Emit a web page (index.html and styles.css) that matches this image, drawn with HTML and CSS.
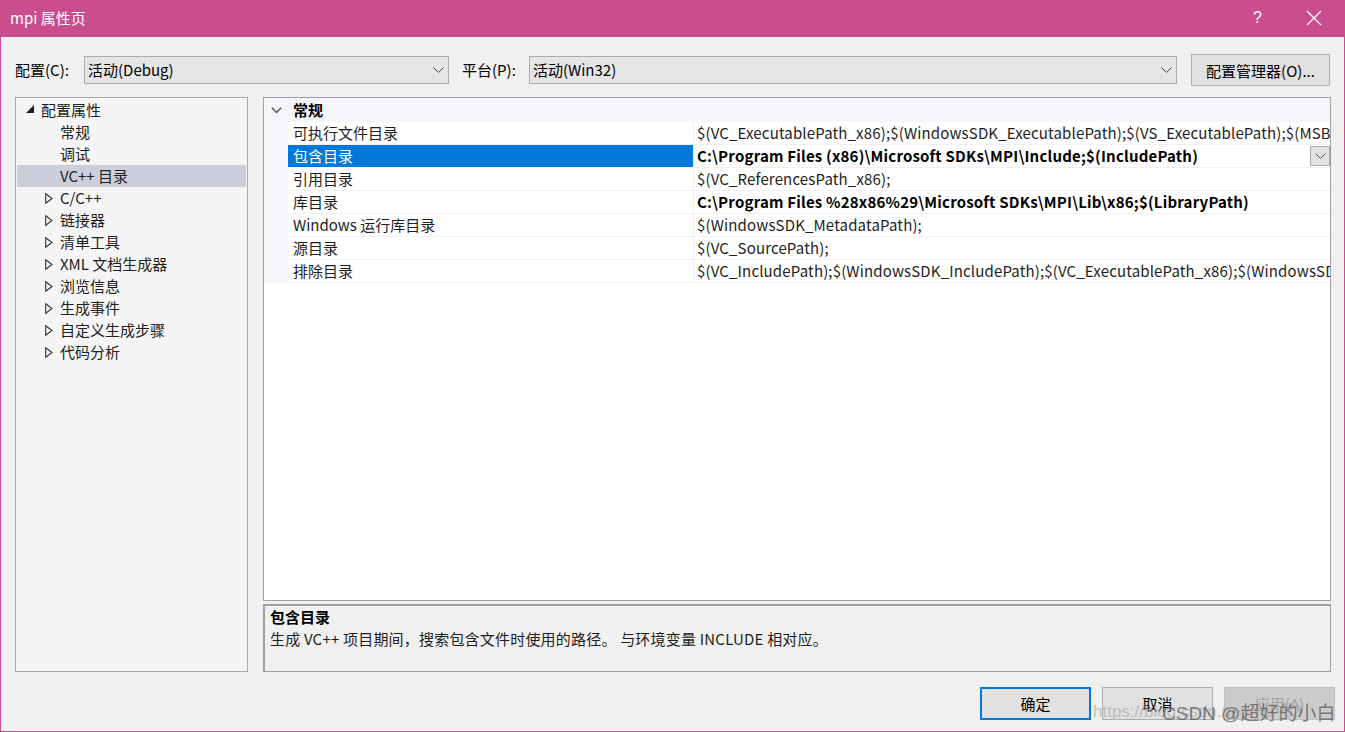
FILE: index.html
```html
<!DOCTYPE html>
<html lang="zh-CN">
<head>
<meta charset="utf-8">
<title>mpi 属性页</title>
<link rel="stylesheet" href="styles.css">
</head>
<body>
<div class="window">
  <div class="titlebar">
    <span class="title">mpi 属性页</span>
    <span class="tb-help">?</span>
    <span class="tb-close">
      <svg width="16" height="16" viewBox="0 0 16 16"><path d="M1 1 L15 15 M15 1 L1 15" stroke="#fff" stroke-width="1.3" fill="none"/></svg>
    </span>
  </div>
  <div class="frame">
    <div class="config-row">
      <span class="lbl lbl1">配置(C):</span>
      <div class="combo combo1"><span>活动(Debug)</span>
        <svg class="chev" width="11" height="7" viewBox="0 0 11 7"><polyline points="0.5,0.5 5.5,5.5 10.5,0.5" fill="none" stroke="#444" stroke-width="1"/></svg>
      </div>
      <span class="lbl lbl2">平台(P):</span>
      <div class="combo combo2"><span>活动(Win32)</span>
        <svg class="chev" width="11" height="7" viewBox="0 0 11 7"><polyline points="0.5,0.5 5.5,5.5 10.5,0.5" fill="none" stroke="#444" stroke-width="1"/></svg>
      </div>
      <button class="btn mgr">配置管理器(O)...</button>
    </div>

    <div class="main">
      <div class="tree">
        <div class="node root"><svg class="tri-exp" width="8" height="8" viewBox="0 0 8 8"><polygon points="8,0 8,8 0,8" fill="#1e1e1e"/></svg>配置属性</div>
        <div class="node leaf">常规</div>
        <div class="node leaf">调试</div>
        <div class="node leaf sel">VC++ 目录</div>
        <div class="node group"><svg class="tri-col" width="8" height="11" viewBox="0 0 8 11"><polygon points="0.7,0.7 7,5.5 0.7,10.3" fill="none" stroke="#333" stroke-width="1.1"/></svg>C/C++</div>
        <div class="node group"><svg class="tri-col" width="8" height="11" viewBox="0 0 8 11"><polygon points="0.7,0.7 7,5.5 0.7,10.3" fill="none" stroke="#333" stroke-width="1.1"/></svg>链接器</div>
        <div class="node group"><svg class="tri-col" width="8" height="11" viewBox="0 0 8 11"><polygon points="0.7,0.7 7,5.5 0.7,10.3" fill="none" stroke="#333" stroke-width="1.1"/></svg>清单工具</div>
        <div class="node group"><svg class="tri-col" width="8" height="11" viewBox="0 0 8 11"><polygon points="0.7,0.7 7,5.5 0.7,10.3" fill="none" stroke="#333" stroke-width="1.1"/></svg>XML 文档生成器</div>
        <div class="node group"><svg class="tri-col" width="8" height="11" viewBox="0 0 8 11"><polygon points="0.7,0.7 7,5.5 0.7,10.3" fill="none" stroke="#333" stroke-width="1.1"/></svg>浏览信息</div>
        <div class="node group"><svg class="tri-col" width="8" height="11" viewBox="0 0 8 11"><polygon points="0.7,0.7 7,5.5 0.7,10.3" fill="none" stroke="#333" stroke-width="1.1"/></svg>生成事件</div>
        <div class="node group"><svg class="tri-col" width="8" height="11" viewBox="0 0 8 11"><polygon points="0.7,0.7 7,5.5 0.7,10.3" fill="none" stroke="#333" stroke-width="1.1"/></svg>自定义生成步骤</div>
        <div class="node group"><svg class="tri-col" width="8" height="11" viewBox="0 0 8 11"><polygon points="0.7,0.7 7,5.5 0.7,10.3" fill="none" stroke="#333" stroke-width="1.1"/></svg>代码分析</div>
      </div>

      <div class="right">
        <div class="grid">
          <div class="grid-head">
            <span class="gutter"><svg width="11" height="7" viewBox="0 0 11 7"><polyline points="0.8,0.8 5.5,5.5 10.2,0.8" fill="none" stroke="#555" stroke-width="1.5"/></svg></span>
            <span class="head-text">常规</span>
          </div>
          <div class="prow"><span class="gutter"></span><span class="pname">可执行文件目录</span><span class="pval">$(VC_ExecutablePath_x86);$(WindowsSDK_ExecutablePath);$(VS_ExecutablePath);$(MSBuild_ExecutablePath);$(FxCopDir);$(PATH);</span></div>
          <div class="prow selrow"><span class="gutter"></span><span class="pname">包含目录</span><span class="pval bold">C:\Program Files (x86)\Microsoft SDKs\MPI\Include;$(IncludePath)</span><span class="dd"><svg width="11" height="7" viewBox="0 0 11 7"><polyline points="0.5,0.5 5.5,5.5 10.5,0.5" fill="none" stroke="#555" stroke-width="1"/></svg></span></div>
          <div class="prow"><span class="gutter"></span><span class="pname">引用目录</span><span class="pval">$(VC_ReferencesPath_x86);</span></div>
          <div class="prow"><span class="gutter"></span><span class="pname">库目录</span><span class="pval bold">C:\Program Files %28x86%29\Microsoft SDKs\MPI\Lib\x86;$(LibraryPath)</span></div>
          <div class="prow"><span class="gutter"></span><span class="pname">Windows 运行库目录</span><span class="pval">$(WindowsSDK_MetadataPath);</span></div>
          <div class="prow"><span class="gutter"></span><span class="pname">源目录</span><span class="pval">$(VC_SourcePath);</span></div>
          <div class="prow"><span class="gutter"></span><span class="pname">排除目录</span><span class="pval">$(VC_IncludePath);$(WindowsSDK_IncludePath);$(VC_ExecutablePath_x86);$(WindowsSDK_LibraryPath_x86);</span></div>
        </div>
        <div class="desc">
          <div class="desc-title">包含目录</div>
          <div class="desc-text">生成 VC++ 项目期间，搜索包含文件时使用的路径。 与环境变量 INCLUDE 相对应。</div>
        </div>
      </div>
    </div>

    <div class="btn-row">
      <button class="btn dlg default">确定</button>
      <button class="btn dlg">取消</button>
      <button class="btn dlg disabled">应用(A)</button>
    </div>
  </div>
  <div class="wm-url">https://blog.csdn.net/m0_52</div>
  <div class="wm-name">CSDN @超好的小白</div>
</div>
</body>
</html>
```

FILE: styles.css
```css
html, body {
  margin: 0;
  padding: 0;
}
body {
  font-family: "Noto Sans CJK SC", "Noto Sans", sans-serif;
  font-size: 15px;
  color: #000;
  background: #f0f0f0;
}
.window {
  width: 1345px;
  height: 732px;
  display: flex;
  flex-direction: column;
  position: relative;
  overflow: hidden;
}
.titlebar {
  height: 37px;
  flex: none;
  background: #ca4d8e;
  color: #fff;
  display: flex;
  align-items: center;
  padding-left: 10px;
  box-sizing: border-box;
}
.title {
  font-size: 15px;
  line-height: 20px;
  margin-top: -1px;
}
.tb-help {
  margin-left: auto;
  font-family: "Liberation Sans", sans-serif;
  font-size: 16px;
  color: #fff;
  margin-right: 44px;
  margin-top: -2px;
}
.tb-close {
  display: flex;
  margin-right: 23px;
  margin-top: -1px;
}
.frame {
  flex: 1;
  border: 1px solid #c94c8d;
  border-top: 0;
  background: #f0f0f0;
  display: flex;
  flex-direction: column;
  min-width: 0;
}
.config-row {
  display: flex;
  align-items: center;
  height: 32px;
  margin-top: 17px;
  padding: 0 14px;
}
.lbl {
  flex: none;
  line-height: 20px;
}
.lbl1 { width: 69px; }
.lbl2 { width: 67px; margin-left: 13px; }
.combo {
  flex: none;
  height: 28px;
  box-sizing: border-box;
  background: #e5e5e5;
  border: 1px solid #acacac;
  display: flex;
  align-items: center;
  padding-left: 3px;
  padding-right: 4px;
}
.combo span { flex: 1; line-height: 20px; }
.combo1 { width: 365px; }
.combo2 { width: 648px; }
.chev { flex: none; }
.btn {
  font-family: "Noto Sans CJK SC", "Noto Sans", sans-serif;
  font-size: 15px;
  color: #000;
  background: #e1e1e1;
  border: 1px solid #adadad;
  padding: 0;
  box-sizing: border-box;
}
.mgr {
  width: 139px;
  height: 32px;
  margin-left: 14px;
}
.main {
  display: flex;
  margin-top: 11px;
  height: 575px;
  padding: 0 13px 0 14px;
  gap: 15px;
}
.tree {
  width: 233px;
  flex: none;
  box-sizing: border-box;
  border: 1px solid #a9a9a9;
  background: #f5f5f5;
  padding: 1px 1px 0 1px;
}
.node {
  height: 22px;
  line-height: 22px;
  display: flex;
  align-items: center;
  white-space: nowrap;
  color: #1e1e1e;
}
.node.root { padding-left: 9px; }
.tri-exp { margin-right: 7px; margin-top: -3px; }
.node.leaf { padding-left: 43px; }
.node.group { padding-left: 28px; }
.tri-col { margin-right: 7px; margin-left: 0; }
.node.sel { background: #cccedb; }
.right {
  width: 1068px;
  flex: none;
  min-width: 0;
  display: flex;
  flex-direction: column;
  gap: 3px;
}
.grid {
  height: 504px;
  box-sizing: border-box;
  border: 1px solid #a0a0a0;
  background: #fff;
  overflow: hidden;
}
.grid-head {
  height: 24px;
  display: flex;
  align-items: center;
  background: #f4f6fa;
}
.gutter {
  width: 24px;
  flex: none;
  align-self: stretch;
  background: #f4f6fa;
  display: flex;
  align-items: center;
  justify-content: center;
}
.grid-head .gutter { padding-top: 1px; box-sizing: border-box; }
.head-text {
  font-weight: bold;
  padding-left: 5px;
  line-height: 20px;
}
.prow {
  height: 23px;
  display: flex;
  position: relative;
  white-space: nowrap;
}
.pname {
  width: 406px;
  height: 23px;
  flex: none;
  box-sizing: border-box;
  padding-left: 5px;
  line-height: 22px;
  border-right: 1px solid #f0f0f0;
  border-bottom: 1px solid #f0f0f0;
  overflow: hidden;
  color: #1e1e1e;
}
.pval {
  flex: 1;
  min-width: 0;
  overflow: hidden;
  padding-left: 3px;
  line-height: 22px;
  height: 23px;
  box-sizing: border-box;
  border-bottom: 1px solid #f0f0f0;
  color: #1e1e1e;
  letter-spacing: 0.15px;
}
.pval.bold { font-weight: bold; color: #000; letter-spacing: 0.2px; }
.selrow .pname {
  background: #0078d7;
  color: #fff;
  border-bottom-color: #fff;
}
.dd {
  position: absolute;
  right: 0;
  top: 1px;
  width: 20px;
  height: 20px;
  box-sizing: border-box;
  background: #e1e1e1;
  border: 1px solid #adadad;
  display: flex;
  align-items: center;
  justify-content: center;
}
.desc {
  height: 68px;
  box-sizing: border-box;
  border: 1px solid #a0a0a0;
  border-top-width: 2px;
  border-left-width: 2px;
  background: #f0f0f0;
  padding: 0 0 0 5px;
}
.desc-title {
  font-weight: bold;
  line-height: 22px;
}
.desc-text {
  line-height: 22px;
  color: #1e1e1e;
  letter-spacing: 0.2px;
}
.btn-row {
  display: flex;
  justify-content: flex-end;
  gap: 11px;
  margin-top: 15px;
  padding-right: 9px;
}
.dlg {
  width: 111px;
  height: 33px;
}
.dlg.default {
  border: 2px solid #0078d7;
}
.dlg.disabled {
  background: #cccccc;
  border-color: #bfbfbf;
  color: #a0a0a0;
}
.wm-url {
  position: absolute;
  left: 1093px;
  top: 702px;
  font-family: "Liberation Sans", sans-serif;
  font-size: 17px;
  color: rgba(170, 170, 170, 0.7);
  white-space: nowrap;
}
.wm-name {
  position: absolute;
  left: 1162px;
  top: 698px;
  font-family: "Liberation Sans", "Noto Sans CJK SC", sans-serif;
  font-size: 19px;
  color: rgba(90, 90, 90, 0.75);
  white-space: nowrap;
}
```
